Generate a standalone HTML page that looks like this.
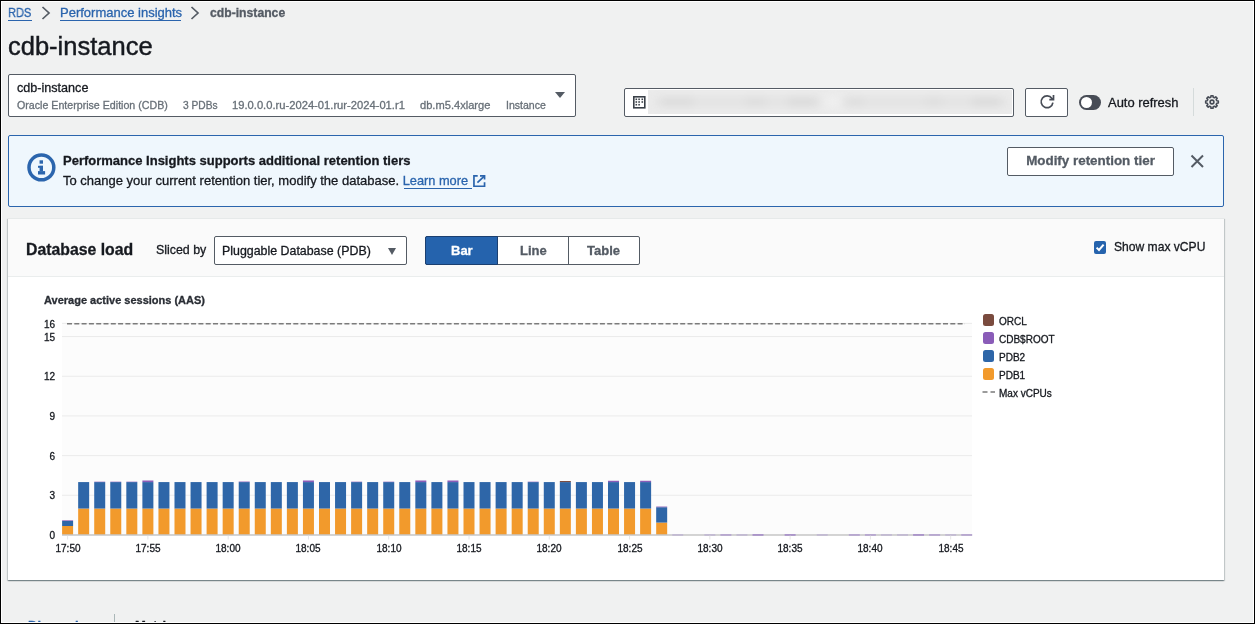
<!DOCTYPE html>
<html>
<head>
<meta charset="utf-8">
<style>
html,body{margin:0;padding:0;}
body{width:1255px;height:624px;overflow:hidden;-webkit-font-smoothing:antialiased;-webkit-text-stroke:0.3px currentColor;background:#f0f1f1;font-family:"Liberation Sans",sans-serif;color:#16191f;position:relative;}
.frame{position:absolute;left:0;top:0;width:1253px;height:622px;border:1px solid #000;}
.frame2{position:absolute;left:1px;top:1px;width:1251px;height:620px;border:1px solid #fff;}
.a{position:absolute;white-space:nowrap;will-change:transform;}
.link{color:#2a64ad;}
.bc{font-size:13px;line-height:16px;top:5px;}
.ul{position:absolute;height:1px;background:#2a64ad;}
.chev{position:absolute;}
h1{-webkit-text-stroke:0.45px currentColor;will-change:transform;margin:0;position:absolute;left:8px;top:31px;font-size:25.5px;font-weight:normal;line-height:30px;white-space:nowrap;}
.box{position:absolute;box-sizing:border-box;border:1px solid #545b64;border-radius:2px;background:#fff;}
.sub{font-size:11px;color:#687078;line-height:13px;top:98.8px;}
.tri{position:absolute;width:0;height:0;border-left:5px solid transparent;border-right:5px solid transparent;border-top:7px solid #545b64;}
.flash{position:absolute;left:8px;top:135px;width:1216px;height:72px;box-sizing:border-box;border:1px solid #2b65ad;border-radius:2px;background:#eff7fd;}
.btn{will-change:transform;position:absolute;box-sizing:border-box;border:1px solid #545b64;border-radius:2px;background:#fff;color:#545b64;font-weight:bold;font-size:13px;text-align:center;}
.card{position:absolute;left:8px;top:218px;width:1216px;height:362px;box-sizing:border-box;border-top:1px solid #e6e9e9;background:#fff;box-shadow:0 1px 1px 0 rgba(0,28,36,.3),1px 1px 1px 0 rgba(0,28,36,.15),-1px 1px 1px 0 rgba(0,28,36,.15);}
.chead{position:absolute;left:0;top:0;width:1216px;height:58px;background:#fafafa;border-bottom:1px solid #eaeded;box-sizing:border-box;}
.yl{will-change:transform;position:absolute;left:20px;width:35px;text-align:right;font-size:10px;line-height:14px;color:#16191f;}
.xl{will-change:transform;position:absolute;top:541.5px;width:60px;text-align:center;font-size:10px;line-height:14px;color:#16191f;}
.lsq{position:absolute;left:982.8px;width:11.5px;height:12px;border-radius:2.5px;}
.ltx{will-change:transform;position:absolute;left:999px;font-size:10px;line-height:16px;color:#16191f;white-space:nowrap;}
</style>
</head>
<body>

<!-- breadcrumb -->
<div class="a bc link" style="left:8px;transform:scaleX(0.85);transform-origin:0 0;">RDS</div>
<div class="ul" style="left:8px;top:20px;width:23.5px;"></div>
<svg class="chev" style="left:41px;top:6px" width="10" height="14" viewBox="0 0 10 14"><path d="M1.5 1 L8 7 L1.5 13" fill="none" stroke="#545b64" stroke-width="1.7"/></svg>
<div class="a bc link" style="left:59.5px;">Performance insights</div>
<div class="ul" style="left:60px;top:20px;width:121.3px;"></div>
<svg class="chev" style="left:190px;top:6px" width="10" height="14" viewBox="0 0 10 14"><path d="M1.5 1 L8 7 L1.5 13" fill="none" stroke="#545b64" stroke-width="1.7"/></svg>
<div class="a bc" style="left:210px;font-weight:bold;color:#545b64;font-size:12.2px;">cdb-instance</div>

<h1>cdb-instance</h1>

<!-- instance select -->
<div class="box" style="left:8px;top:74px;width:568px;height:43px;"></div>
<div class="a" style="left:16.5px;top:81px;font-size:12.6px;line-height:15px;">cdb-instance</div>
<div class="a sub" style="left:16.5px;font-size:10.65px;">Oracle Enterprise Edition (CDB)</div>
<div class="a sub" style="left:182.5px;font-size:10.2px;">3 PDBs</div>
<div class="a sub" style="left:231.5px;font-size:11.2px;">19.0.0.0.ru-2024-01.rur-2024-01.r1</div>
<div class="a sub" style="left:420.3px;font-size:11.12px;">db.m5.4xlarge</div>
<div class="a sub" style="left:505.5px;font-size:10.55px;">Instance</div>
<div class="tri" style="left:555.3px;top:92px;border-left-width:5px;border-right-width:5px;border-top-width:6.6px;"></div>

<!-- date range -->
<div class="box" style="left:624px;top:88px;width:390px;height:29px;"></div>
<svg style="position:absolute;left:633px;top:96px" width="13" height="13" viewBox="0 0 13 13">
<rect x="0.8" y="0.8" width="11" height="11" fill="#fff" stroke="#3a4048" stroke-width="1.6"/>
<g fill="#3a4048"><rect x="2.5" y="2.5" width="1.6" height="1.6"/><rect x="5.3" y="2.5" width="1.6" height="1.6"/><rect x="8.5" y="2.5" width="1.6" height="1.6"/><rect x="2.5" y="5.2" width="1.6" height="1.6"/><rect x="5.3" y="5.2" width="1.6" height="1.6"/><rect x="8.5" y="5.2" width="1.6" height="1.6"/><rect x="2.5" y="7.9" width="1.6" height="1.6"/><rect x="5.3" y="7.9" width="1.6" height="1.6"/></g></svg>
<div style="position:absolute;left:648px;top:90px;width:364px;height:24px;background:#ebebeb;overflow:hidden;">
  <div style="position:absolute;left:0;top:0;width:100%;height:100%;filter:blur(4px);"><div style="position:absolute;left:7px;top:8px;width:167px;height:8px;background:#e2e2e2;border-radius:4px;"></div><div style="position:absolute;left:195px;top:8px;width:165px;height:8px;background:#e2e2e2;border-radius:4px;"></div><div style="position:absolute;left:176px;top:8px;width:17px;height:8px;background:#f1f1f1;border-radius:4px;"></div><div style="position:absolute;left:12px;top:8px;width:34px;height:8px;background:#d9d9d9;border-radius:4px;"></div><div style="position:absolute;left:96px;top:8px;width:23px;height:8px;background:#dbdbdb;border-radius:4px;"></div><div style="position:absolute;left:139px;top:8px;width:30px;height:8px;background:#d8d8d8;border-radius:4px;"></div><div style="position:absolute;left:196px;top:8px;width:20px;height:8px;background:#dbdbdb;border-radius:4px;"></div><div style="position:absolute;left:276px;top:8px;width:20px;height:8px;background:#dcdcdc;border-radius:4px;"></div><div style="position:absolute;left:323px;top:8px;width:30px;height:8px;background:#d8d8d8;border-radius:4px;"></div></div>
</div>

<!-- refresh -->
<div class="btn" style="left:1025px;top:88px;width:43px;height:29px;"></div>
<svg style="position:absolute;left:1039px;top:94px" width="16" height="16" viewBox="0 0 16 16">
<path d="M13.9 8.6 A5.9 5.9 0 1 1 12.9 4.4 L13.9 5.4" fill="none" stroke="#474c56" stroke-width="1.7"/>
<path d="M10.3 5.7 L14.5 5.7 L14.5 1.1" fill="none" stroke="#474c56" stroke-width="1.7"/>
</svg>
<!-- toggle -->
<div style="position:absolute;left:1079px;top:95px;width:22px;height:15px;border-radius:7.5px;background:#474c56;"></div>
<div style="position:absolute;left:1081px;top:97px;width:11px;height:11px;border-radius:5.5px;background:#fff;"></div>
<div class="a" style="left:1108px;top:95px;font-size:12.95px;line-height:15px;">Auto refresh</div>
<div style="position:absolute;left:1193px;top:88px;width:1px;height:28px;background:#d5dbdb;"></div>
<!-- gear -->
<svg style="position:absolute;left:1204px;top:94px" width="16" height="16" viewBox="0 0 16 16">
<path d="M7.00 1.68 L9.00 1.68 L9.19 3.25 L10.52 3.80 L11.76 2.82 L13.18 4.24 L12.20 5.48 L12.75 6.81 L14.32 7.00 L14.32 9.00 L12.75 9.19 L12.20 10.52 L13.18 11.76 L11.76 13.18 L10.52 12.20 L9.19 12.75 L9.00 14.32 L7.00 14.32 L6.81 12.75 L5.48 12.20 L4.24 13.18 L2.82 11.76 L3.80 10.52 L3.25 9.19 L1.68 9.00 L1.68 7.00 L3.25 6.81 L3.80 5.48 L2.82 4.24 L4.24 2.82 L5.48 3.80 L6.81 3.25 Z" fill="none" stroke="#474c56" stroke-width="1.6" stroke-linejoin="round"/>
<circle cx="8" cy="8" r="1.9" fill="none" stroke="#474c56" stroke-width="1.6"/>
</svg>

<!-- flash -->
<div class="flash"></div>
<svg style="position:absolute;left:27px;top:153px" width="29" height="29" viewBox="0 0 29 29">
<circle cx="14.4" cy="14.4" r="12.4" fill="none" stroke="#2b65ad" stroke-width="3.5"/>
<g fill="#2b65ad"><rect x="12.55" y="7.3" width="3.45" height="3.4"/><rect x="11" y="12.8" width="5" height="2"/><rect x="12.55" y="12.8" width="3.45" height="5.5"/><rect x="11" y="18.1" width="7.1" height="3.4"/></g>
</svg>
<div class="a" style="left:63px;top:153px;font-size:13px;line-height:16px;font-weight:bold;">Performance Insights supports additional retention tiers</div>
<div class="a" style="left:63px;top:173px;font-size:13px;line-height:16px;">To change your current retention tier, modify the database. <span class="link" style="font-size:12.8px;">Learn more</span></div>
<div class="ul" style="left:404px;top:188px;width:68px;"></div>
<svg style="position:absolute;left:472px;top:174px" width="15" height="15" viewBox="0 0 15 15">
<path d="M5.7 1.85 H1.95 V12.25 H12.55 V8.3" fill="none" stroke="#2a64ad" stroke-width="1.7"/>
<path d="M8 1.85 H12.55 V5.6" fill="none" stroke="#2a64ad" stroke-width="1.7"/>
<path d="M12.3 2.1 L5.4 8.7" fill="none" stroke="#2a64ad" stroke-width="1.7"/>
</svg>
<div class="btn" style="left:1007px;top:147px;width:167px;height:29px;line-height:26px;font-size:13.4px;">Modify retention tier</div>
<svg style="position:absolute;left:1190px;top:154px" width="15" height="15" viewBox="0 0 15 15">
<path d="M1.5 1.5 L13 13 M13 1.5 L1.5 13" stroke="#545b64" stroke-width="2"/>
</svg>

<!-- card -->
<div class="card">
  <div class="chead"></div>
</div>
<div class="a" style="left:25.8px;top:241px;font-size:15.8px;line-height:18px;font-weight:bold;">Database load</div>
<div class="a" style="left:156px;top:242.7px;font-size:12.4px;line-height:15px;">Sliced by</div>
<div class="box" style="left:214px;top:236px;width:193px;height:29px;"></div>
<div class="a" style="left:222px;top:243.7px;font-size:12.4px;line-height:15px;">Pluggable Database (PDB)</div>
<div class="tri" style="left:387.5px;top:247.5px;border-left-width:4.8px;border-right-width:4.8px;border-top-width:7px;"></div>
<!-- segmented -->
<div class="box" style="left:425px;top:236px;width:215px;height:29px;"></div>
<div style="position:absolute;left:425px;top:236px;width:73px;height:29px;background:#2563ad;border-radius:2px 0 0 2px;box-sizing:border-box;border:1px solid #1b3f70;"></div>
<div style="position:absolute;left:568px;top:236px;width:1px;height:29px;background:#545b64;"></div>
<div class="a" style="left:451px;top:243px;font-size:13px;line-height:15px;font-weight:bold;color:#fff;">Bar</div>
<div class="a" style="left:520px;top:243px;font-size:13px;line-height:15px;font-weight:bold;color:#545b64;">Line</div>
<div class="a" style="left:587px;top:243px;font-size:13px;line-height:15px;font-weight:bold;color:#545b64;">Table</div>
<!-- checkbox -->
<div style="position:absolute;left:1094px;top:241px;width:12px;height:12.5px;border-radius:2px;background:#2563ad;"></div>
<svg style="position:absolute;left:1094px;top:241px" width="12" height="13" viewBox="0 0 12 13"><path d="M2.6 6.6 L5 9 L9.6 3.6" fill="none" stroke="#fff" stroke-width="2"/></svg>
<div class="a" style="left:1113.5px;top:239.5px;font-size:12.1px;line-height:15px;">Show max vCPU</div>

<div class="a" style="left:44px;top:292.7px;font-size:11px;line-height:14px;font-weight:bold;color:#2a2e35;">Average active sessions (AAS)</div>

<svg style="position:absolute;left:0;top:0" width="1255" height="624">
<rect x="62" y="323.5" width="910" height="211.5" fill="#fcfcfc"/>
<line x1="62" x2="972" y1="495.31" y2="495.31" stroke="#ebebeb" stroke-width="1"/>
<line x1="62" x2="972" y1="455.62" y2="455.62" stroke="#ebebeb" stroke-width="1"/>
<line x1="62" x2="972" y1="415.93" y2="415.93" stroke="#ebebeb" stroke-width="1"/>
<line x1="62" x2="972" y1="376.24" y2="376.24" stroke="#ebebeb" stroke-width="1"/>
<line x1="62" x2="972" y1="336.55" y2="336.55" stroke="#ebebeb" stroke-width="1"/>
<line x1="62" x2="972" y1="323.32" y2="323.32" stroke="#ebebeb" stroke-width="1"/>
<rect x="62.10" y="526.00" width="11" height="9.00" fill="#f29a2c"/>
<rect x="62.10" y="520.98" width="11" height="5.03" fill="#2e66a8"/>
<rect x="62.10" y="520.31" width="11" height="0.66" fill="#8a5cb8"/>
<rect x="78.16" y="508.54" width="11" height="26.46" fill="#f29a2c"/>
<rect x="78.16" y="482.08" width="11" height="26.46" fill="#2e66a8"/>
<rect x="94.21" y="508.54" width="11" height="26.46" fill="#f29a2c"/>
<rect x="94.21" y="482.08" width="11" height="26.46" fill="#2e66a8"/>
<rect x="94.21" y="481.68" width="11" height="0.40" fill="#8a5cb8"/>
<rect x="110.27" y="508.54" width="11" height="26.46" fill="#f29a2c"/>
<rect x="110.27" y="482.08" width="11" height="26.46" fill="#2e66a8"/>
<rect x="110.27" y="481.68" width="11" height="0.40" fill="#8a5cb8"/>
<rect x="126.32" y="508.54" width="11" height="26.46" fill="#f29a2c"/>
<rect x="126.32" y="482.08" width="11" height="26.46" fill="#2e66a8"/>
<rect x="126.32" y="481.68" width="11" height="0.40" fill="#8a5cb8"/>
<rect x="142.38" y="508.54" width="11" height="26.46" fill="#f29a2c"/>
<rect x="142.38" y="482.08" width="11" height="26.46" fill="#2e66a8"/>
<rect x="142.38" y="480.49" width="11" height="1.59" fill="#8a5cb8"/>
<rect x="158.44" y="508.54" width="11" height="26.46" fill="#f29a2c"/>
<rect x="158.44" y="482.08" width="11" height="26.46" fill="#2e66a8"/>
<rect x="174.49" y="508.54" width="11" height="26.46" fill="#f29a2c"/>
<rect x="174.49" y="482.08" width="11" height="26.46" fill="#2e66a8"/>
<rect x="190.55" y="508.54" width="11" height="26.46" fill="#f29a2c"/>
<rect x="190.55" y="482.08" width="11" height="26.46" fill="#2e66a8"/>
<rect x="206.60" y="508.54" width="11" height="26.46" fill="#f29a2c"/>
<rect x="206.60" y="482.08" width="11" height="26.46" fill="#2e66a8"/>
<rect x="222.66" y="508.54" width="11" height="26.46" fill="#f29a2c"/>
<rect x="222.66" y="482.08" width="11" height="26.46" fill="#2e66a8"/>
<rect x="238.72" y="508.54" width="11" height="26.46" fill="#f29a2c"/>
<rect x="238.72" y="482.08" width="11" height="26.46" fill="#2e66a8"/>
<rect x="238.72" y="481.55" width="11" height="0.53" fill="#8a5cb8"/>
<rect x="254.77" y="508.54" width="11" height="26.46" fill="#f29a2c"/>
<rect x="254.77" y="482.08" width="11" height="26.46" fill="#2e66a8"/>
<rect x="270.83" y="508.54" width="11" height="26.46" fill="#f29a2c"/>
<rect x="270.83" y="482.08" width="11" height="26.46" fill="#2e66a8"/>
<rect x="286.88" y="508.54" width="11" height="26.46" fill="#f29a2c"/>
<rect x="286.88" y="482.08" width="11" height="26.46" fill="#2e66a8"/>
<rect x="302.94" y="508.54" width="11" height="26.46" fill="#f29a2c"/>
<rect x="302.94" y="482.08" width="11" height="26.46" fill="#2e66a8"/>
<rect x="302.94" y="480.49" width="11" height="1.59" fill="#8a5cb8"/>
<rect x="319.00" y="508.54" width="11" height="26.46" fill="#f29a2c"/>
<rect x="319.00" y="482.08" width="11" height="26.46" fill="#2e66a8"/>
<rect x="335.05" y="508.54" width="11" height="26.46" fill="#f29a2c"/>
<rect x="335.05" y="482.08" width="11" height="26.46" fill="#2e66a8"/>
<rect x="351.11" y="508.54" width="11" height="26.46" fill="#f29a2c"/>
<rect x="351.11" y="482.08" width="11" height="26.46" fill="#2e66a8"/>
<rect x="351.11" y="481.68" width="11" height="0.40" fill="#8a5cb8"/>
<rect x="367.16" y="508.54" width="11" height="26.46" fill="#f29a2c"/>
<rect x="367.16" y="482.08" width="11" height="26.46" fill="#2e66a8"/>
<rect x="383.22" y="508.54" width="11" height="26.46" fill="#f29a2c"/>
<rect x="383.22" y="482.08" width="11" height="26.46" fill="#2e66a8"/>
<rect x="383.22" y="481.68" width="11" height="0.40" fill="#8a5cb8"/>
<rect x="399.28" y="508.54" width="11" height="26.46" fill="#f29a2c"/>
<rect x="399.28" y="482.08" width="11" height="26.46" fill="#2e66a8"/>
<rect x="415.33" y="508.54" width="11" height="26.46" fill="#f29a2c"/>
<rect x="415.33" y="482.08" width="11" height="26.46" fill="#2e66a8"/>
<rect x="415.33" y="480.49" width="11" height="1.59" fill="#8a5cb8"/>
<rect x="431.39" y="508.54" width="11" height="26.46" fill="#f29a2c"/>
<rect x="431.39" y="482.08" width="11" height="26.46" fill="#2e66a8"/>
<rect x="447.44" y="508.54" width="11" height="26.46" fill="#f29a2c"/>
<rect x="447.44" y="482.08" width="11" height="26.46" fill="#2e66a8"/>
<rect x="447.44" y="480.49" width="11" height="1.59" fill="#8a5cb8"/>
<rect x="463.50" y="508.54" width="11" height="26.46" fill="#f29a2c"/>
<rect x="463.50" y="482.08" width="11" height="26.46" fill="#2e66a8"/>
<rect x="479.56" y="508.54" width="11" height="26.46" fill="#f29a2c"/>
<rect x="479.56" y="482.08" width="11" height="26.46" fill="#2e66a8"/>
<rect x="495.61" y="508.54" width="11" height="26.46" fill="#f29a2c"/>
<rect x="495.61" y="482.08" width="11" height="26.46" fill="#2e66a8"/>
<rect x="511.67" y="508.54" width="11" height="26.46" fill="#f29a2c"/>
<rect x="511.67" y="482.08" width="11" height="26.46" fill="#2e66a8"/>
<rect x="527.72" y="508.54" width="11" height="26.46" fill="#f29a2c"/>
<rect x="527.72" y="482.08" width="11" height="26.46" fill="#2e66a8"/>
<rect x="527.72" y="481.68" width="11" height="0.40" fill="#8a5cb8"/>
<rect x="543.78" y="508.54" width="11" height="26.46" fill="#f29a2c"/>
<rect x="543.78" y="482.08" width="11" height="26.46" fill="#2e66a8"/>
<rect x="559.84" y="508.54" width="11" height="26.46" fill="#f29a2c"/>
<rect x="559.84" y="482.08" width="11" height="26.46" fill="#2e66a8"/>
<rect x="559.84" y="481.02" width="11" height="1.06" fill="#7a4b3e"/>
<rect x="575.89" y="508.54" width="11" height="26.46" fill="#f29a2c"/>
<rect x="575.89" y="482.08" width="11" height="26.46" fill="#2e66a8"/>
<rect x="591.95" y="508.54" width="11" height="26.46" fill="#f29a2c"/>
<rect x="591.95" y="482.08" width="11" height="26.46" fill="#2e66a8"/>
<rect x="608.00" y="508.54" width="11" height="26.46" fill="#f29a2c"/>
<rect x="608.00" y="482.08" width="11" height="26.46" fill="#2e66a8"/>
<rect x="608.00" y="480.76" width="11" height="1.32" fill="#8a5cb8"/>
<rect x="624.06" y="508.54" width="11" height="26.46" fill="#f29a2c"/>
<rect x="624.06" y="482.08" width="11" height="26.46" fill="#2e66a8"/>
<rect x="640.12" y="508.54" width="11" height="26.46" fill="#f29a2c"/>
<rect x="640.12" y="482.08" width="11" height="26.46" fill="#2e66a8"/>
<rect x="640.12" y="480.76" width="11" height="1.32" fill="#8a5cb8"/>
<rect x="656.17" y="522.56" width="11" height="12.44" fill="#f29a2c"/>
<rect x="656.17" y="507.22" width="11" height="15.35" fill="#2e66a8"/>
<rect x="656.17" y="506.56" width="11" height="0.66" fill="#8a5cb8"/>
<line x1="62" x2="972" y1="535" y2="535" stroke="#c6c6c6" stroke-width="1.5"/>
<rect x="672.23" y="534.3" width="11" height="1.3" fill="#bdb1d3"/>
<rect x="704.34" y="534.3" width="11" height="1.3" fill="#bdb1d3"/>
<rect x="720.40" y="534.3" width="11" height="1.3" fill="#ad96cf"/>
<rect x="736.45" y="534.3" width="11" height="1.3" fill="#bdb1d3"/>
<rect x="752.51" y="534.3" width="11" height="1.3" fill="#9a7bc6"/>
<rect x="784.62" y="534.3" width="11" height="1.3" fill="#9a7bc6"/>
<rect x="816.73" y="534.3" width="11" height="1.3" fill="#bdb1d3"/>
<rect x="848.84" y="534.3" width="11" height="1.3" fill="#ad96cf"/>
<rect x="864.90" y="534.3" width="11" height="1.3" fill="#ad96cf"/>
<rect x="880.96" y="534.3" width="11" height="1.3" fill="#bdb1d3"/>
<rect x="897.01" y="534.3" width="11" height="1.3" fill="#bdb1d3"/>
<rect x="913.07" y="534.3" width="11" height="1.3" fill="#9a7bc6"/>
<rect x="929.12" y="534.3" width="11" height="1.3" fill="#ad96cf"/>
<rect x="945.18" y="534.3" width="11" height="1.3" fill="#bdb1d3"/>
<rect x="961.24" y="534.3" width="11" height="1.3" fill="#ad96cf"/>
<line x1="67.60" x2="67.60" y1="535.7" y2="539.5" stroke="#e6e6e6" stroke-width="1"/>
<line x1="147.88" x2="147.88" y1="535.7" y2="539.5" stroke="#e6e6e6" stroke-width="1"/>
<line x1="228.16" x2="228.16" y1="535.7" y2="539.5" stroke="#e6e6e6" stroke-width="1"/>
<line x1="308.44" x2="308.44" y1="535.7" y2="539.5" stroke="#e6e6e6" stroke-width="1"/>
<line x1="388.72" x2="388.72" y1="535.7" y2="539.5" stroke="#e6e6e6" stroke-width="1"/>
<line x1="469.00" x2="469.00" y1="535.7" y2="539.5" stroke="#e6e6e6" stroke-width="1"/>
<line x1="549.28" x2="549.28" y1="535.7" y2="539.5" stroke="#e6e6e6" stroke-width="1"/>
<line x1="629.56" x2="629.56" y1="535.7" y2="539.5" stroke="#e6e6e6" stroke-width="1"/>
<line x1="709.84" x2="709.84" y1="535.7" y2="539.5" stroke="#e6e6e6" stroke-width="1"/>
<line x1="790.12" x2="790.12" y1="535.7" y2="539.5" stroke="#e6e6e6" stroke-width="1"/>
<line x1="870.40" x2="870.40" y1="535.7" y2="539.5" stroke="#e6e6e6" stroke-width="1"/>
<line x1="950.68" x2="950.68" y1="535.7" y2="539.5" stroke="#e6e6e6" stroke-width="1"/>
<line x1="67" x2="965" y1="323.8" y2="323.8" stroke="#7b7b7b" stroke-width="1.5" stroke-dasharray="5 2.3"/>
</svg>
<div class="yl" style="top:529.00px">0</div>
<div class="yl" style="top:489.31px">3</div>
<div class="yl" style="top:449.62px">6</div>
<div class="yl" style="top:409.93px">9</div>
<div class="yl" style="top:370.24px">12</div>
<div class="yl" style="top:331.35px">15</div>
<div class="yl" style="top:318.12px">16</div>
<div class="xl" style="left:37.60px">17:50</div>
<div class="xl" style="left:117.88px">17:55</div>
<div class="xl" style="left:198.16px">18:00</div>
<div class="xl" style="left:278.44px">18:05</div>
<div class="xl" style="left:358.72px">18:10</div>
<div class="xl" style="left:439.00px">18:15</div>
<div class="xl" style="left:519.28px">18:20</div>
<div class="xl" style="left:599.56px">18:25</div>
<div class="xl" style="left:679.84px">18:30</div>
<div class="xl" style="left:760.12px">18:35</div>
<div class="xl" style="left:840.40px">18:40</div>
<div class="xl" style="left:920.68px">18:45</div>
<div class="lsq" style="top:314.20px;background:#7a4b3e"></div>
<div class="ltx" style="top:314.20px">ORCL</div>
<div class="lsq" style="top:332.20px;background:#8a5cb8"></div>
<div class="ltx" style="top:332.20px">CDB&#36;ROOT</div>
<div class="lsq" style="top:350.20px;background:#2e66a8"></div>
<div class="ltx" style="top:350.20px">PDB2</div>
<div class="lsq" style="top:368.20px;background:#f29a2c"></div>
<div class="ltx" style="top:368.20px">PDB1</div>
<svg class="ldash" style="position:absolute;left:982px;top:390.20px" width="14" height="4"><line x1="0.5" x2="13" y1="2" y2="2" stroke="#7b7b7b" stroke-width="1.5" stroke-dasharray="5 3"/></svg>
<div class="ltx" style="top:385.50px">Max vCPUs</div>

<!-- bottom tabs (cut off) -->
<div class="a" style="left:28px;top:618px;font-size:13px;line-height:16px;color:#2a64ad;font-weight:bold;">Dimensions</div>
<div style="position:absolute;left:114px;top:614px;width:1px;height:10px;background:#aab7b8;"></div>
<div class="a" style="left:135px;top:618px;font-size:13px;line-height:16px;color:#16191f;font-weight:bold;">Metrics</div>
<div class="frame"></div>
<div class="frame2"></div>
</body>
</html>
